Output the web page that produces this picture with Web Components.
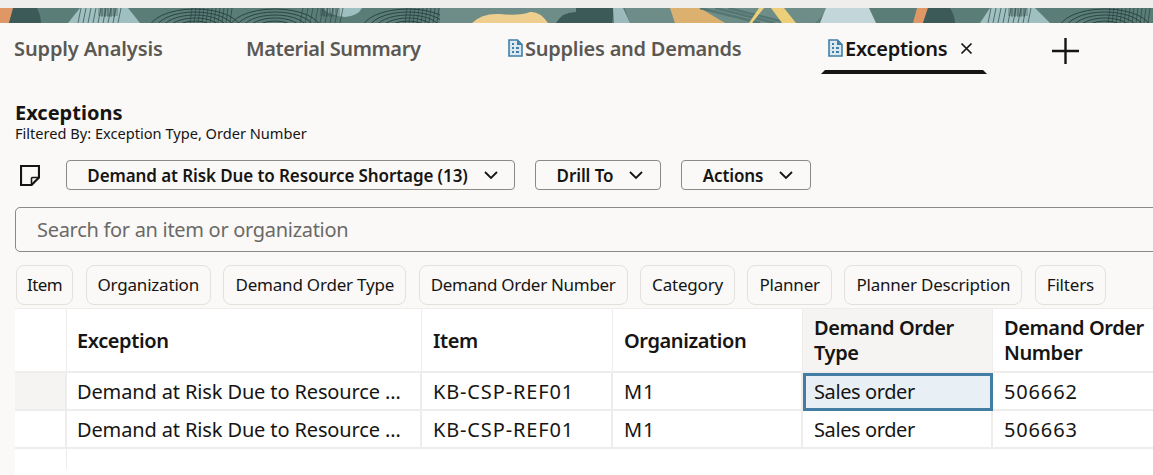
<!DOCTYPE html>
<html>
<head>
<meta charset="utf-8">
<title>Exceptions</title>
<style>
  html, body { margin: 0; height: 475px; overflow: hidden; background: #faf9f8; }
  body { font-family: "Noto Sans", sans-serif; color: #161513; }
  app-page { width: 1153px; }
</style>
</head>
<body>
<app-page>
  <app-banner></app-banner>
  <tab-bar>
    <app-tab style="width:232px; --ls:-.12px">Supply Analysis</app-tab>
    <app-tab style="width:262px; --ls:-.37px">Material Summary</app-tab>
    <app-tab style="width:320px" doc>Supplies and Demands</app-tab>
    <app-tab style="width:166px" doc active closable>Exceptions</app-tab>
  </tab-bar>
  <page-title heading="Exceptions" sub="Filtered By: Exception Type, Order Number"></page-title>
  <action-bar>
    <menu-button style="width:449px">Demand at Risk Due to Resource Shortage (13)</menu-button>
    <menu-button style="width:126px">Drill To</menu-button>
    <menu-button style="width:130px">Actions</menu-button>
  </action-bar>
  <search-box placeholder="Search for an item or organization"></search-box>
  <chip-row>
    <filter-chip style="width:57px; padding:0 0 2px; justify-content:center; letter-spacing:-.6px">Item</filter-chip>
    <filter-chip>Organization</filter-chip>
    <filter-chip>Demand Order Type</filter-chip>
    <filter-chip style="letter-spacing:-.3px">Demand Order Number</filter-chip>
    <filter-chip>Category</filter-chip>
    <filter-chip>Planner</filter-chip>
    <filter-chip>Planner Description</filter-chip>
    <filter-chip>Filters</filter-chip>
  </chip-row>
  <data-grid></data-grid>
</app-page>

<script>
const DOC_ICON = `<svg width="15" height="18" viewBox="0 0 15 18"><path d="M1 1h8.5L14 5.5V17H1z" fill="#dbe8ef" stroke="#3f7fa8" stroke-width="1.6"/><path d="M9 1v5h5" fill="#3f7fa8"/><path d="M4 4h2v2H4zM4 8h2v2H4zM4 12h2v2H4zM8 8h3v2H8zM8 12h3v2H8z" fill="#3f7fa8"/></svg>`;

class AppPage extends HTMLElement {
  constructor() {
    super();
    this.attachShadow({ mode: 'open' }).innerHTML = `
      <style>:host { display: flex; flex-direction: column; }</style>
      <slot></slot>`;
  }
}

class AppBanner extends HTMLElement {
  constructor() {
    super();
    this.attachShadow({ mode: 'open' });
  }
  connectedCallback() {
    // los arcos y el rayado se repiten en dos sitios de la franja
    const hatch = x => {
      let s = '';
      for (let i = 0; i < 9; i++) s += `<path d="M${x + i * 5} 15L${x + 3 + i * 5} 0" stroke="#2f4a48" stroke-width=".7" fill="none"/>`;
      for (let i = 0; i < 5; i++) s += `<path d="M${x + 24 + i * 3} 0v9" stroke="#2f4a48" stroke-width=".7"/>`;
      for (let i = 0; i < 4; i++) s += `<path d="M${x + 20} ${1 + i * 2}h20" stroke="#2f4a48" stroke-width=".6"/>`;
      return s;
    };
    const arcs = x => {
      let s = '';
      for (let r = 9; r < 22; r += 3) s += `<ellipse cx="${x}" cy="22" rx="${r * 2.2}" ry="${r}" stroke="#2a4442" stroke-width="1" fill="none"/>`;
      return s;
    };
    const lines = x => {
      let s = '';
      for (let i = 0; i < 11; i++) s += `<path d="M${x + i * 4} 15L${x + 2 + i * 4} 0" stroke="#2a4442" stroke-width=".7"/>`;
      return s;
    };
    this.shadowRoot.innerHTML = `
      <style>
        :host { display: block; padding-top: 8px; background: #efeeec; height: 15px; }
        svg { display: block; }
      </style>
      <svg width="1153" height="15" viewBox="0 0 1153 15">
        <rect width="1153" height="15" fill="#5b7d77"/>
        <path d="M0 0H14L9 15H0z" fill="#df9766"/>
        <path d="M13 0H37Q41 8 41 15H9z" fill="#3c5a58"/>
        <path d="M80 0H128L140 15H68z" fill="#a0bfc0"/>
        ${hatch(78)}
        ${arcs(195)}
        ${lines(190)}
        ${arcs(275)}
        <path d="M322 0H362Q358 8 345 9Q330 8 322 0z" fill="#a0bfc0"/>
        ${hatch(300)}
        ${arcs(408)}
        ${lines(405)}
        <path d="M440 0H576V15H440z" fill="#6f8d88"/>
        <path d="M472 15Q482 5 500 6Q520 8 530 4Q540 3 548 15z" fill="#efcf8f"/>
        <path d="M556 15Q562 4 576 4V15z" fill="#3c5a58"/>
        <path d="M576 0H614L612 15H576z" fill="#3c5a58"/>
        <path d="M613 0H623L630 15H614z" fill="#9cbabb"/>
        <path d="M625 0H830L815 15H630z" fill="#6f8d88"/>
        <path d="M670 0H700L725 15H675z" fill="#dcb06e"/>
        <path d="M700 0L760 15M715 0L775 15M728 0L788 15" stroke="#557672" stroke-width="2.5"/>
        <path d="M759 0H764L752 15H749z" fill="#eccf7a"/>
        <path d="M771 0H784L796 15H782z" fill="#eccf7a"/>
        <path d="M826 0H869L876 15H820z" fill="#c3d6d9"/>
        <path d="M917 0H928L923 15H913z" fill="#df9766"/>
        <path d="M928 0H950Q955 8 955 15H923z" fill="#3c5a58"/>
        <path d="M990 0H1035L1050 15H980z" fill="#a0bfc0"/>
        ${hatch(988)}
        ${arcs(1105)}
        ${lines(1108)}
      </svg>`;
  }
}

class TabBar extends HTMLElement {
  constructor() {
    super();
    this.attachShadow({ mode: 'open' }).innerHTML = `
      <style>
        :host { display: flex; align-items: stretch; height: 51px; padding-left: 7px; }
        svg { margin: 15px 0 0 65px; }
      </style>
      <slot></slot>
      <svg width="27" height="26" viewBox="0 0 27 26"><path d="M13.5 0v26M0 13h27" stroke="#161513" stroke-width="2.4"/></svg>`;
  }
}

class AppTab extends HTMLElement {
  constructor() {
    super();
    this.attachShadow({ mode: 'open' });
  }
  connectedCallback() {
    const active = this.hasAttribute('active');
    this.shadowRoot.innerHTML = `
      <style>
        :host { display: block; box-sizing: border-box; padding: 0 7px; position: relative; flex: none; }
        .label { display: flex; align-items: center; height: 50px; font-size: 20px; font-weight: 600; white-space: nowrap;
                 color: ${active ? '#161513' : '#5b5854'}; letter-spacing: var(--ls, -.25px); }
        .label svg { margin: 0 2px 0 0; }
        .close { margin-left: 13px; font-size: 0; }
        .bar { position: absolute; left: 0; right: 0; bottom: 0; height: 4px; background: #161513;
               clip-path: polygon(4px 0, calc(100% - 4px) 0, 100% 100%, 0 100%); }
      </style>
      <div class="label">
        ${this.hasAttribute('doc') ? DOC_ICON : ''}<slot></slot>
        ${this.hasAttribute('closable') ? '<span class="close"><svg width="13" height="13" viewBox="0 0 13 13"><path d="M1.5 1.5l10 10M11.5 1.5l-10 10" stroke="#161513" stroke-width="1.7"/></svg></span>' : ''}
      </div>
      ${active ? '<div class="bar"></div>' : ''}`;
  }
}

class PageTitle extends HTMLElement {
  constructor() {
    super();
    this.attachShadow({ mode: 'open' });
  }
  connectedCallback() {
    this.shadowRoot.innerHTML = `
      <style>
        :host { display: block; padding: 27px 0 0 15px; }
        h2 { margin: 0; font-size: 20px; line-height: 24px; font-weight: 700; }
        p { margin: 0; font-size: 14.6px; line-height: 16px; }
      </style>
      <h2>${this.getAttribute('heading')}</h2>
      <p>${this.getAttribute('sub')}</p>`;
  }
}

class ActionBar extends HTMLElement {
  constructor() {
    super();
    this.attachShadow({ mode: 'open' }).innerHTML = `
      <style>
        :host { display: flex; align-items: center; gap: 20px; padding: 19px 0 0 20px; }
        svg { margin-right: 6px; }
      </style>
      <svg width="20" height="21" viewBox="0 0 20 21"><path d="M1 1h18v11.5L11.5 20H1z" fill="none" stroke="#161513" stroke-width="2.2"/><path d="M11.5 20v-6.5q0-1 1-1H19" fill="none" stroke="#161513" stroke-width="1.6"/></svg>
      <slot></slot>`;
  }
}

class MenuButton extends HTMLElement {
  constructor() {
    super();
    this.attachShadow({ mode: 'open' }).innerHTML = `
      <style>
        :host { display: block; box-sizing: border-box; height: 30px; flex: none; }
        button { all: unset; box-sizing: border-box; width: 100%; height: 100%; display: flex; align-items: center; justify-content: center;
                 gap: 15px; padding-left: 5px; border: 1px solid #8b8985; border-radius: 4px; font: 600 17px "Noto Sans", sans-serif; letter-spacing: -.1px;
                 color: #161513; white-space: nowrap; }
      </style>
      <button><slot></slot><svg width="16" height="10" viewBox="0 0 16 10"><path d="M2 2l6 6 6-6" fill="none" stroke="#161513" stroke-width="1.8"/></svg></button>`;
  }
}

class SearchBox extends HTMLElement {
  constructor() {
    super();
    this.attachShadow({ mode: 'open' });
  }
  connectedCallback() {
    this.shadowRoot.innerHTML = `
      <style>
        :host { display: block; margin: 17px 0 0 15px; width: 1160px; box-sizing: border-box; height: 45px;
                border: 1px solid #8b8985; border-radius: 5px; }
        div { display: flex; align-items: center; justify-content: space-between; height: 100%; padding: 0 0 0 21px; }
        span { font-size: 20px; color: #6b6966; letter-spacing: -.3px; }
        svg { margin-right: -4px; }
      </style>
      <div><span>${this.getAttribute('placeholder')}</span>
      <svg width="22" height="22" viewBox="0 0 22 22"><circle cx="9" cy="9" r="7" fill="none" stroke="#161513" stroke-width="1.8"/></svg></div>`;
  }
}

class ChipRow extends HTMLElement {
  constructor() {
    super();
    this.attachShadow({ mode: 'open' }).innerHTML = `
      <style>:host { display: flex; gap: 12.5px; padding: 13px 0 0 16px; }</style>
      <slot></slot>`;
  }
}

class FilterChip extends HTMLElement {
  constructor() {
    super();
    this.attachShadow({ mode: 'open' }).innerHTML = `
      <style>
        :host { display: flex; align-items: center; box-sizing: border-box; height: 40px; padding: 0 11px 2px;
                border: 1px solid #e3e1de; border-radius: 8px; font-size: 17px; letter-spacing: -.2px; white-space: nowrap; color: #161513; }
      </style>
      <slot></slot>`;
  }
}

class DataGrid extends HTMLElement {
  constructor() {
    super();
    this.attachShadow({ mode: 'open' });
  }
  connectedCallback() {
    const heads = ['', 'Exception', 'Item', 'Organization', 'Demand Order<br>Type', 'Demand Order<br>Number'];
    const rows = [
      ['', 'Demand at Risk Due to Resource …', 'KB-CSP-REF01', 'M1', 'Sales order', '506662'],
      ['', 'Demand at Risk Due to Resource …', 'KB-CSP-REF01', 'M1', 'Sales order', '506663'],
    ];
    const colClass = i => (i === 1 ? ' first' : '') + (i === 4 ? ' ord' : '');
    const headHtml = heads.map((h, i) => `<div class="c head${colClass(i === 4 ? -1 : i)}${i === 4 ? ' hot' : ''}">${h}</div>`).join('');
    const bodyHtml = rows.map((r, y) => r.map((t, i) => {
      let cls = 'c' + colClass(i);
      if (y === 0 && i === 0) cls += ' hot';
      if (y === 0 && i === 4) cls += ' focus';
      if (t && !/[a-z]/.test(t)) cls += ' caps'; // codigos y numeros van mas abiertos
      return `<div class="${cls}">${t}</div>`;
    }).join('')).join('');
    this.shadowRoot.innerHTML = `
      <style>
        :host { display: block; margin: 3px 0 0 15px; width: 1138px; height: 167px; background: #fff; overflow: hidden;
                border-top: 1px solid #eeedeb; box-sizing: border-box; }
        .grid { display: grid; grid-template-columns: 52px 355px 191px 190px 190px 200px; grid-template-rows: 64px 38px 38px; }
        .c { box-sizing: border-box; display: flex; align-items: center; padding: 0 10px 0 11px; font-size: 20px; letter-spacing: -.13px; white-space: nowrap;
             border-right: 2px solid #eeedeb; border-bottom: 2px solid #eeedeb; }
        .first { padding-left: 10px; }
        .ord { letter-spacing: -.4px; }
        .head { font-weight: 600; line-height: 25px; letter-spacing: -.4px; border-right-width: 1px; }
        .caps { letter-spacing: .85px; }
        .hot { background: #f5f4f2; }
        .focus { background: #e8f0f6; outline: 3px solid #427da3; outline-offset: -3px; }
        .stub { width: 1px; height: 20px; background: #eeedeb; margin-left: 51px; }
      </style>
      <div class="grid">${headHtml}${bodyHtml}</div>
      <div class="stub"></div>`;
  }
}

customElements.define('app-page', AppPage);
customElements.define('app-banner', AppBanner);
customElements.define('tab-bar', TabBar);
customElements.define('app-tab', AppTab);
customElements.define('page-title', PageTitle);
customElements.define('action-bar', ActionBar);
customElements.define('menu-button', MenuButton);
customElements.define('search-box', SearchBox);
customElements.define('chip-row', ChipRow);
customElements.define('filter-chip', FilterChip);
customElements.define('data-grid', DataGrid);
</script>
</body>
</html>
